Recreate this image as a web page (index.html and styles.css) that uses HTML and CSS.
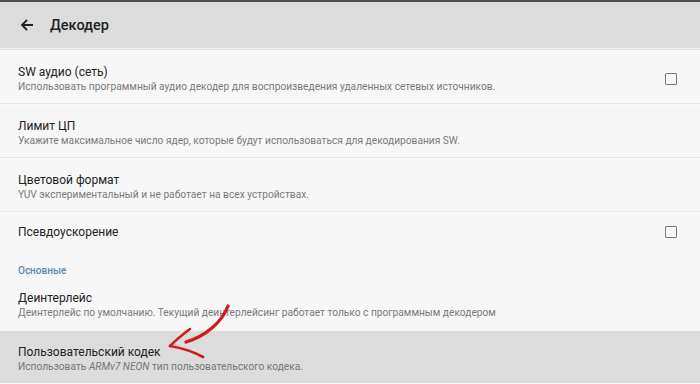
FILE: index.html
```html
<!DOCTYPE html>
<html lang="ru">
<head>
    <meta charset="UTF-8">
    <meta name="viewport" content="width=device-width, initial-scale=1.0">
    <title>Декодер</title>
    <link rel="stylesheet" href="styles.css">
</head>
<body>

    <!-- Toolbar -->
    <div class="toolbar">
        <svg class="back" width="14" height="14" viewBox="0 0 14 14">
            <path d="M13 7H2M7 2L2 7l5 5" fill="none" stroke="#222" stroke-width="1.8"/>
        </svg>
        <span class="toolbar-title">Декодер</span>
    </div>

    <!-- Settings list -->
    <div class="list">
        <div class="row">
            <div class="text">
                <div class="title">SW аудио (сеть)</div>
                <div class="summary">Использовать программный аудио декодер для воспроизведения удаленных сетевых источников.</div>
            </div>
            <span class="checkbox"></span>
        </div>

        <div class="row">
            <div class="text">
                <div class="title">Лимит ЦП</div>
                <div class="summary">Укажите максимальное число ядер, которые будут использоваться для декодирования SW.</div>
            </div>
        </div>

        <div class="row">
            <div class="text">
                <div class="title">Цветовой формат</div>
                <div class="summary">YUV экспериментальный и не работает на всех устройствах.</div>
            </div>
        </div>

        <div class="row single">
            <div class="text">
                <div class="title">Псевдоускорение</div>
            </div>
            <span class="checkbox"></span>
        </div>

        <div class="category">Основные</div>

        <div class="row plain">
            <div class="text">
                <div class="title">Деинтерлейс</div>
                <div class="summary">Деинтерлейс по умолчанию. Текущий деинтерлейсинг работает только с программным декодером</div>
            </div>
        </div>

        <div class="row selected">
            <div class="text">
                <div class="title">Пользовательский кодек</div>
                <div class="summary">Использовать <i>ARMv7 NEON</i> тип пользовательского кодека.</div>
            </div>
        </div>
    </div>

    <!-- Red hand-drawn arrow over the list -->
    <svg class="pointer" width="700" height="384" viewBox="0 0 700 384">
        <g fill="none" stroke="#d3191c" stroke-linecap="round" stroke-linejoin="round">
            <path d="M228 306 C222 322 206 336 186 342" stroke-width="3.2"/>
            <path d="M190 329 C182 335 176 340 170 346" stroke-width="2.6"/>
            <path d="M170 346 C182 348 194 352 203 357" stroke-width="2.6"/>
        </g>
    </svg>

</body>
</html>
```

FILE: styles.css
```css
body {
    margin: 0;
    width: 700px;
    height: 384px;
    overflow: hidden;
    font-family: Roboto, "Noto Sans", sans-serif;
    background-color: #f7f7f7;
    position: relative;
}

.toolbar {
    display: flex;
    align-items: center;
    height: 46px;
    padding-left: 20px;
    border-top: 2px solid #4e4e4e;
    border-bottom: 1px solid #f0f0f0;
    background-color: #dcdcdc;
}

.back {
    margin-right: 16px;
}

.toolbar-title {
    font-size: 14.5px;
    font-weight: 500;
    color: #222;
}

.list {
    border-top: 1px solid #e2e2e2;
}

.row {
    display: flex;
    align-items: center;
    padding: 14px 23px 10px 18px;
    border-bottom: 1px solid #e6e6e6;
    box-shadow: 0 1px 0 #fbfbfb;
}

.row .text {
    flex: 1;
}

.title {
    font-size: 12px;
    line-height: 16px;
    color: #222;
}

.summary {
    margin-top: 1px;
    font-size: 10.2px;
    line-height: 12px;
    color: #7a7a7a;
}

.checkbox {
    width: 10px;
    height: 10px;
    border: 1.6px solid #777;
    border-radius: 1px;
}

.row.single {
    padding-top: 12px;
    padding-bottom: 12px;
    border-bottom: none;
    box-shadow: none;
}

.category {
    padding: 12px 18px 0;
    font-size: 10px;
    line-height: 14px;
    font-weight: 500;
    color: #5b86b4;
}

.row.plain {
    padding-top: 12px;
    padding-bottom: 12px;
    border-bottom: none;
    box-shadow: none;
}

.row.selected {
    padding-top: 13px;
    background-color: #dcdcdc;
    border-bottom: none;
    box-shadow: none;
}

.row.selected .summary {
    color: #777;
}

/* Annotation overlay */
.pointer {
    position: absolute;
    top: 0;
    left: 0;
    pointer-events: none;
}
```
